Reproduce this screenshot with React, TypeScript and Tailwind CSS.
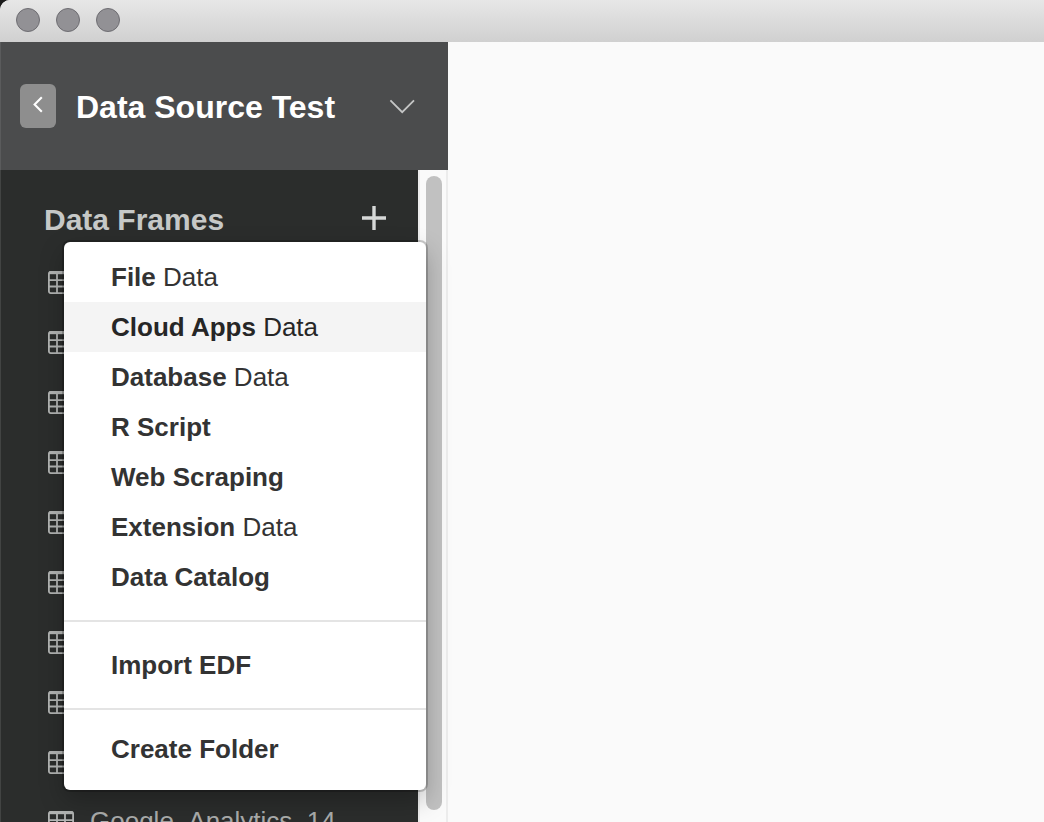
import React from "react";

type MenuEntry = { strong: string; rest?: string; active?: boolean };

const dataEntries: MenuEntry[] = [
  { strong: "File", rest: "Data" },
  { strong: "Cloud Apps", rest: "Data", active: true },
  { strong: "Database", rest: "Data" },
  { strong: "R Script" },
  { strong: "Web Scraping" },
  { strong: "Extension", rest: "Data" },
  { strong: "Data Catalog" },
];

const frames: string[] = ["", "", "", "", "", "", "", "", "", "Google_Analytics_14"];

function TableIcon() {
  return (
    <svg width="26" height="23" viewBox="0 0 26 23" fill="none" aria-hidden="true" className="shrink-0 text-[#b2b4b3]">
      <rect x="0.9" y="0.9" width="24.2" height="21.2" rx="1.8" stroke="currentColor" strokeWidth="1.8" />
      <path d="M1 1.8H25" stroke="currentColor" strokeWidth="2.8" />
      <path d="M1 9.2H25M1 15.5H25M9 2V22M17 2V22" stroke="currentColor" strokeWidth="1.8" />
    </svg>
  );
}

function MenuItem({ strong, rest, active }: MenuEntry) {
  return (
    <button
      type="button"
      role="menuitem"
      className={`flex h-[50px] w-full items-center pl-[47px] text-left text-[26px] leading-8 whitespace-pre ${
        active ? "bg-[#f4f4f4] text-[#262626]" : "text-[#333333]"
      }`}
    >
      <span>
        <b className="font-bold">{strong}</b>
        {rest ? ` ${rest}` : ""}
      </span>
    </button>
  );
}

function AddMenu() {
  return (
    <div
      role="menu"
      aria-label="Add data"
      className="absolute top-[72px] left-16 z-10 w-[362px] overflow-hidden rounded-md bg-white shadow-[0_0_0_2px_rgba(0,0,0,0.2),0_10px_24px_rgba(0,0,0,0.25)]"
    >
      <div className="pt-[10px] pb-[18px]">
        {dataEntries.map((e) => (
          <MenuItem key={e.strong} {...e} />
        ))}
      </div>
      <div className="border-t-2 border-[#e4e4e4] py-[18px]">
        <MenuItem strong="Import EDF" />
      </div>
      <div className="border-t-2 border-[#e4e4e4] pt-[14px] pb-4">
        <MenuItem strong="Create Folder" />
      </div>
    </div>
  );
}

export default function App() {
  return (
    <div className="h-screen bg-[#1c1c1c] font-['Liberation_Sans',Arial,sans-serif]">
      <div className="flex h-full flex-col overflow-hidden rounded-tl-[10px] bg-[#fafafa]">
        <header className="flex h-[42px] shrink-0 items-start gap-4 bg-linear-to-b from-[#e7e7e7] to-[#d0d0d0] pt-2 pl-4">
          {["Close", "Minimize", "Zoom"].map((label) => (
            <button
              key={label}
              type="button"
              aria-label={label}
              className="size-6 rounded-full border border-[#6e6d72] bg-[#929195]"
            />
          ))}
        </header>

        <div className="flex min-h-0 flex-1">
          <aside className="flex w-[448px] shrink-0 flex-col">
            <div className="flex h-32 shrink-0 items-center border-l border-[#5a5b5c] bg-[#4b4c4d] pr-8 pl-[19px]">
              <button
                type="button"
                aria-label="Back"
                className="flex h-11 w-9 items-center justify-center rounded-md bg-[#8e8e8e] pb-1"
              >
                <svg width="10" height="17" viewBox="0 0 10 17" fill="none" aria-hidden="true">
                  <path d="M8.8 1.2L1.6 8.5L8.8 15.8" stroke="white" strokeWidth="2.1" />
                </svg>
              </button>
              <h1 className="ml-5 flex-1 pt-0.5 text-[32px] leading-10 font-bold whitespace-nowrap text-white">
                Data Source Test
              </h1>
              <button type="button" aria-label="Project menu">
                <svg width="28" height="16" viewBox="0 0 28 16" fill="none" aria-hidden="true">
                  <path d="M2.4 2.4L14.2 14.2L26 2.4" stroke="#c5c6c6" strokeWidth="1.8" />
                </svg>
              </button>
            </div>

            <div className="relative flex min-h-0 flex-1">
              <div className="flex-1 overflow-hidden border-l border-[#424443] bg-[#2b2d2c]">
                <div className="flex h-[82px] items-center justify-between pt-[18px] pr-8 pl-[43px]">
                  <h2 className="text-[30px] leading-9 font-bold text-[#c6c8c7]">Data Frames</h2>
                  <button type="button" aria-label="Add data frame" className="mb-1">
                    <svg width="24" height="24" viewBox="0 0 24 24" fill="none" aria-hidden="true">
                      <path d="M0 12H24M12 0V24" stroke="#d6d8d7" strokeWidth="3.4" />
                    </svg>
                  </button>
                </div>
                <ul>
                  {frames.map((name, i) => (
                    <li key={i} className="flex h-[60px] items-center gap-4 pl-[47px] text-[26px] leading-8 text-[#a9abaa]">
                      <TableIcon />
                      {name && <span className="pb-0.5">{name}</span>}
                    </li>
                  ))}
                </ul>
              </div>
              <div className="flex w-[30px] shrink-0 flex-col border-x-2 border-[#ececec] bg-[#fafafa] px-[6px] pt-[6px] pb-3">
                <div className="w-4 flex-1 rounded-full bg-[#c1c1c1]" />
              </div>
              <AddMenu />
            </div>
          </aside>
          <main className="flex-1 bg-[#fafafa]" />
        </div>
      </div>
    </div>
  );
}
